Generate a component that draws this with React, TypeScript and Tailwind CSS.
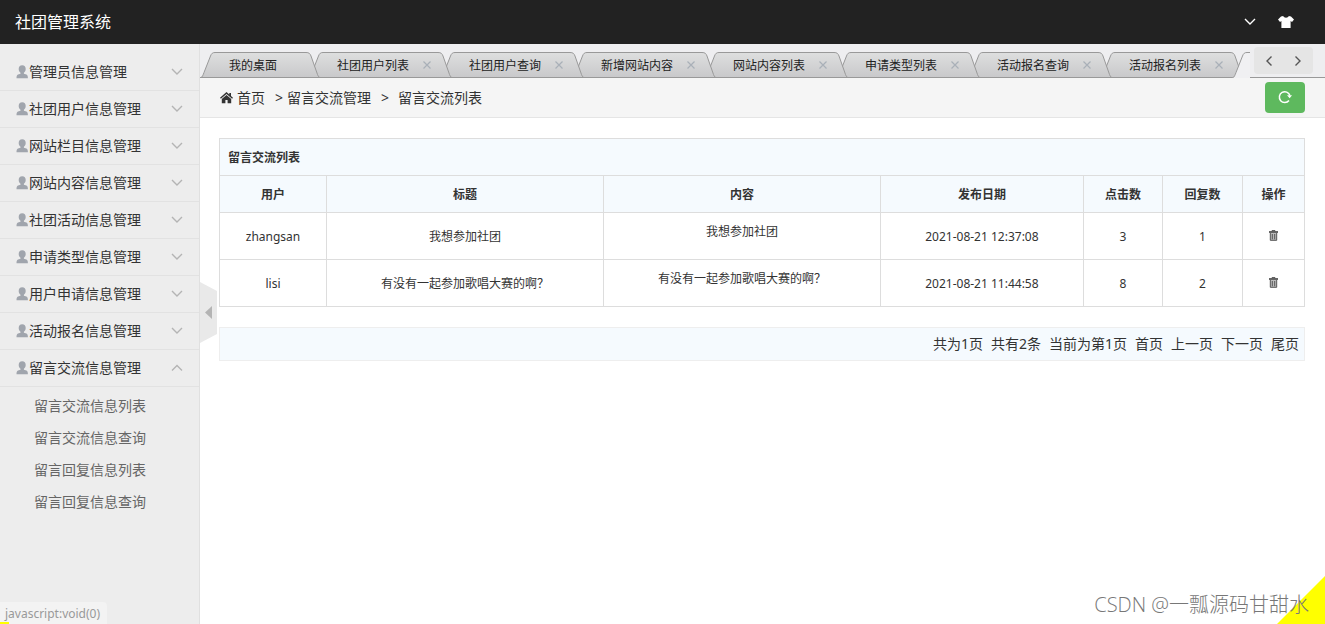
import { useState } from 'react';
import { clsx } from 'clsx';

const menus = [
  { title: '管理员信息管理' },
  { title: '社团用户信息管理' },
  { title: '网站栏目信息管理' },
  { title: '网站内容信息管理' },
  { title: '社团活动信息管理' },
  { title: '申请类型信息管理' },
  { title: '用户申请信息管理' },
  { title: '活动报名信息管理' },
  {
    title: '留言交流信息管理',
    children: ['留言交流信息列表', '留言交流信息查询', '留言回复信息列表', '留言回复信息查询'],
  },
];

const tabs = [
  '社团用户列表',
  '社团用户查询',
  '新增网站内容',
  '网站内容列表',
  '申请类型列表',
  '活动报名查询',
  '活动报名列表',
];

const messages = [
  { user: 'zhangsan', title: '我想参加社团', content: '我想参加社团', date: '2021-08-21 12:37:08', hits: 3, replies: 1 },
  { user: 'lisi', title: '有没有一起参加歌唱大赛的啊？', content: '有没有一起参加歌唱大赛的啊？', date: '2021-08-21 11:44:58', hits: 8, replies: 2 },
];

const pages = ['首页', '上一页', '下一页', '尾页'];

function Chevron({ dir, className }: { dir: 'up' | 'down' | 'left' | 'right'; className?: string }) {
  const d = {
    up: 'M1 8.5 6 3.5l5 5',
    down: 'M1 3l5 5 5-5',
    left: 'M8.5 1.5 4 6l4.5 4.5',
    right: 'M3.5 1.5 8 6l-4.5 4.5',
  }[dir];
  return (
    <svg className={clsx('h-3 w-3', className)} viewBox="0 0 12 12" fill="none" stroke="currentColor" strokeWidth="1.4">
      <path d={d} />
    </svg>
  );
}

function UserIcon() {
  return (
    <svg className="h-[14px] w-[13px] text-[#a0a5ad]" viewBox="0 0 13 14" fill="currentColor">
      <path d="M6.2.3C3.9.3 2.7 1.800 2.700 4c0 1.700.7 2.900 1.800 3.700v1L2 9.500C.9 9.900.5 11 .5 13.300h11.400c0-2.300-.4-3.400-1.500-3.800L7.900 8.700v-1C9 6.900 9.700 5.700 9.700 4 9.700 1.800 8.500.3 6.200.3z" />
    </svg>
  );
}

function HomeIcon() {
  return (
    <svg className="h-3 w-[13px]" viewBox="0 0 13 12" fill="currentColor">
      <path d="M6.500 0 0 5.800l.9 1L6.500 2l5.600 4.800.9-1-2-1.800V1H9.300v1.500z" />
      <path d="M6.500 2.900 1.800 7V11.200h3.600V8h2.200v3.200h3.600V7z" />
    </svg>
  );
}

function ShirtIcon() {
  return (
    <svg className="h-3 w-4" viewBox="0 0 16 12" fill="currentColor">
      <path d="M5.200 0C5.700 1.100 6.700 1.700 8 1.700S10.300 1.100 10.800 0L13 .5 16 3.600 14 5.900l-1.400-.9V12H3.400V5L2 5.900 0 3.600 3 .5z" />
    </svg>
  );
}

function RefreshIcon() {
  return (
    <svg className="h-[14px] w-[14px]" viewBox="0 0 14 14" fill="none" stroke="currentColor" strokeWidth="1.500">
      <path d="M11 10.500A5.400 5.400 0 1 1 11.900 5.500" />
      <path d="M9 5.300h5L11.700 8.300z" fill="currentColor" stroke="none" />
    </svg>
  );
}

function TrashIcon() {
  return (
    <svg className="h-[11px] w-[9px]" viewBox="0 0 9 11" fill="none" stroke="currentColor">
      <path d="M1.300 3h6.400v7.300H1.300z" fill="#bbb" stroke="none" />
      <path d="M0 2h9" strokeWidth="1.800" />
      <path d="M3 1.500V.6h3v.9M1.300 3v7.300h6.400V3M3.300 4v5.300M5.700 4v5.300" />
    </svg>
  );
}

function TabShape({ width, active }: { width: number; active?: boolean }) {
  const d = `M.5 26C2.500 25 3 23 4 20.500L10.500 4C11.500 1.500 12.500.5 15 .5H${width - 16}c3 0 4 1 5 3.500l6.500 18.500c.8 2 1.500 3 3.500 3.500`;
  return (
    <svg className="absolute inset-0 h-full w-full" viewBox={`0 0 ${width} 26`} fill="none">
      <defs>
        <linearGradient id="tab-fill" x1="0" y1="0" x2="0" y2="1">
          <stop offset="0" stopColor="#dedfdf" />
          <stop offset="1" stopColor="#c8c8ca" />
        </linearGradient>
      </defs>
      <path d={d} fill={active ? '#f0f0f2' : 'url(#tab-fill)'} stroke="#999" />
      {!active && <path d={`M0 25.500H${width}`} stroke="#999" />}
    </svg>
  );
}

function Sidebar() {
  const [open, setOpen] = useState('留言交流信息管理');
  return (
    <aside className="w-[200px] shrink-0 border-r border-[#e0e0e0] bg-[#ededed] pt-[10px]">
      <ul>
        {menus.map((m) => (
          <li key={m.title}>
            <button
              type="button"
              onClick={() => setOpen(open === m.title ? '' : m.title)}
              className="flex h-[37px] w-full items-center border-b border-[#e2e2e2] pr-4 pl-4 text-sm text-[#333]"
            >
              <UserIcon />
              <span>{m.title}</span>
              <Chevron dir={open === m.title ? 'up' : 'down'} className="ml-auto text-[#b4b4b4]" />
            </button>
            {m.children && open === m.title && (
              <ul className="py-[3px]">
                {m.children.map((c) => (
                  <li key={c}>
                    <a href="#" className="block h-8 pl-[34px] text-sm leading-8 text-[#666]">
                      {c}
                    </a>
                  </li>
                ))}
              </ul>
            )}
          </li>
        ))}
      </ul>
    </aside>
  );
}

function TabBar() {
  return (
    <div className="flex h-[34px] bg-[#eeeef0]">
      <ul className="flex min-w-0 flex-1 items-end overflow-hidden text-xs text-[#222]">
        <li className="relative z-10 h-[26px] w-[122px] shrink-0">
          <TabShape width={122} />
          <a href="#" className="relative block pl-[29px] leading-[27px]">我的桌面</a>
        </li>
        {tabs.map((t, i) => (
          <li
            key={t}
            className="relative -ml-[14px] flex h-[26px] w-[146px] shrink-0 items-center pl-[29px]"
            style={{ zIndex: 9 - i }}
          >
            <TabShape width={146} />
            <a href="#" className="relative leading-[27px]">{t}</a>
            <button type="button" aria-label={`关闭${t}`} className="relative ml-[14px] text-[#a9b0b8]">
              <svg className="h-2 w-2" viewBox="0 0 8 8" stroke="currentColor" strokeWidth="1.200">
                <path d="M.5.5l7 7M7.500.5l-7 7" />
              </svg>
            </button>
          </li>
        ))}
        <li className="relative z-20 -ml-[14px] h-[26px] w-[146px] shrink-0">
          <TabShape width={146} active />
        </li>
      </ul>
      <div className="flex w-[75px] shrink-0 items-center border-b border-[#999] pl-1">
        <div className="flex h-[27px] w-[59px] items-center justify-around rounded bg-[#e5e5e5] text-[#555]">
          <button type="button" aria-label="向左"><Chevron dir="left" /></button>
          <button type="button" aria-label="向右"><Chevron dir="right" /></button>
        </div>
      </div>
    </div>
  );
}

function MessageTable() {
  return (
    <table className="w-full table-fixed border-collapse text-center text-xs text-[#333] [&_td]:border [&_td]:border-[#ddd] [&_td]:pt-[2px] [&_th]:border [&_th]:border-[#ddd] [&_th]:pt-[2px]">
      <colgroup>
        <col className="w-[107px]" />
        <col />
        <col />
        <col className="w-[203px]" />
        <col className="w-[79px]" />
        <col className="w-[80px]" />
        <col className="w-[62px]" />
      </colgroup>
      <thead className="bg-[#f5fafe]">
        <tr className="h-[37px]">
          <th colSpan={7} className="px-2 text-left">留言交流列表</th>
        </tr>
        <tr className="h-[37px]">
          {['用户', '标题', '内容', '发布日期', '点击数', '回复数', '操作'].map((h) => (
            <th key={h}>{h}</th>
          ))}
        </tr>
      </thead>
      <tbody>
        {messages.map((m) => (
          <tr key={m.user} className="h-[47px]">
            <td>{m.user}</td>
            <td>{m.title}</td>
            <td className="pb-[10px]">{m.content}</td>
            <td>{m.date}</td>
            <td>{m.hits}</td>
            <td>{m.replies}</td>
            <td className="pb-1">
              <button type="button" aria-label="删除" className="align-middle text-[#555]">
                <TrashIcon />
              </button>
            </td>
          </tr>
        ))}
      </tbody>
    </table>
  );
}

export default function App() {
  return (
    <div className="relative flex min-h-screen flex-col bg-white font-['Noto_Sans','Noto_Sans_CJK_SC',sans-serif] text-[#333]">
      <header className="flex h-11 items-center bg-[#222] pr-[31px] pl-[15px] text-white">
        <h1 className="text-base">社团管理系统</h1>
        <div className="ml-auto flex items-center gap-[22px]">
          <button type="button" aria-label="展开"><Chevron dir="down" /></button>
          <button type="button" aria-label="换肤"><ShirtIcon /></button>
        </div>
      </header>

      <div className="flex flex-1">
        <Sidebar />
        <main className="relative min-w-0 flex-1">
          <TabBar />
          <nav className="flex h-10 items-center border-b border-[#e5e5e5] bg-[#f5f5f5] px-5 text-sm">
            <HomeIcon />
            <a href="#" className="ml-1">首页</a>
            <span className="mr-1 ml-[10px]">&gt;</span>
            <span>留言交流管理</span>
            <span className="mr-[9px] ml-[10px]">&gt;</span>
            <span>留言交流列表</span>
            <button
              type="button"
              aria-label="刷新"
              className="mb-px ml-auto flex h-[31px] w-10 items-center justify-center rounded bg-[#5eb95e] text-white"
            >
              <RefreshIcon />
            </button>
          </nav>

          <div className="py-5 pr-5 pl-[19px]">
            <MessageTable />
            <div className="mt-5 flex h-[34px] items-center justify-end gap-2 border border-[#eee] bg-[#f5fafe] px-[5px] text-sm">
              <span>共为1页</span>
              <span>共有2条</span>
              <span>当前为第1页</span>
              {pages.map((p) => (
                <a key={p} href="#">{p}</a>
              ))}
            </div>
          </div>

          {/* sidebar collapse handle */}
          <button type="button" aria-label="收起菜单" className="absolute top-[238px] left-0">
            <svg className="h-[61px] w-[17px]" viewBox="0 0 17 61">
              <path d="M0 0l17 9v43L0 61z" fill="#e9e9e9" />
              <path d="M12 24v13L5 30.500z" fill="#b4b4b4" />
            </svg>
          </button>
        </main>
      </div>

      <div className="absolute bottom-0 left-0 h-[22px] rounded-tr-sm bg-[#f3f3f3] pr-[7px] pl-[5px] text-xs leading-6 text-[#999]">
        javascript:void(0)
        <span className="absolute bottom-0 left-0 h-[2px] w-[9px] bg-[#ff0]" />
      </div>
      <svg className="absolute right-0 bottom-0 h-12 w-12" viewBox="0 0 48 48">
        <path d="M48 0v48H0z" fill="#ff0" />
      </svg>
      <p className="absolute right-4 bottom-[5px] font-['Open_Sans','Noto_Sans_CJK_SC',sans-serif] text-xl leading-7 font-light text-[#777]">
        CSDN @一瓢源码甘甜水
      </p>
    </div>
  );
}
